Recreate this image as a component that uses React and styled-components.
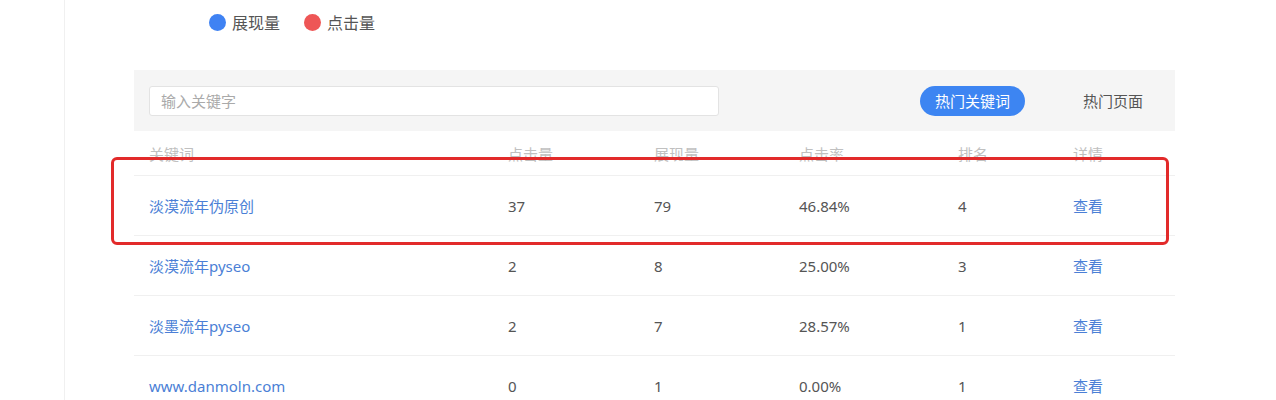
import React from 'react';
import styled, { createGlobalStyle } from 'styled-components';

const GlobalStyle = createGlobalStyle`
  body {
    margin: 0;
    background: #fff;
    font-family: "Noto Sans", "Noto Sans CJK SC", sans-serif;
  }
`;

const Page = styled.div`
  display: flex;
  height: 400px;
  overflow: hidden;
`;

const Gutter = styled.div`
  width: 64px;
  flex-shrink: 0;
`;

const Main = styled.div`
  flex: 1;
  border-left: 1px solid #f0f0f0;
  padding-left: 69px;
  padding-right: 101px;
`;

const Legend = styled.div`
  display: flex;
  gap: 24px;
  padding-left: 75px;
  height: 44px;
  align-items: center;
`;

const LegendItem = styled.div`
  display: flex;
  align-items: center;
  gap: 6px;
  font-size: 16px;
  color: #555;
`;

const Dot = styled.span`
  width: 17px;
  height: 17px;
  border-radius: 50%;
  background: ${p => p.color};
`;

const FilterBar = styled.div`
  margin-top: 26px;
  height: 61px;
  background: #f5f5f5;
  display: flex;
  align-items: center;
  padding: 0 15px;
`;

const SearchInput = styled.input`
  width: 570px;
  height: 30px;
  box-sizing: border-box;
  border: 1px solid #e3e3e3;
  border-radius: 3px;
  background: #fff;
  padding: 0 11px;
  font-size: 15px;
  font-family: inherit;
  color: #333;
  &::placeholder {
    color: #aaa;
  }
`;

const Tabs = styled.div`
  margin-left: auto;
  display: flex;
  align-items: center;
  gap: 58px;
  padding-right: 17px;
`;

const Tab = styled.div`
  height: 30px;
  line-height: 30px;
  padding: 0 ${p => (p.active ? '15px' : '0')};
  border-radius: 15px;
  font-size: 15px;
  background: ${p => (p.active ? '#3d85f2' : 'transparent')};
  color: ${p => (p.active ? '#fff' : '#555')};
`;

const Table = styled.div`
  position: relative;
`;

const Row = styled.div`
  display: grid;
  grid-template-columns: 359px 146px 145px 159px 115px 1fr;
  align-items: center;
  height: ${p => (p.head ? '44px' : '59px')};
  border-bottom: 1px solid #f0f0f0;
  padding-left: 15px;
  font-size: 15px;
  color: ${p => (p.head ? '#c0c0c0' : '#555')};
`;

const Cell = styled.div``;

const LinkCell = styled.div`
  color: #4b7fd6;
`;

const Highlight = styled.div`
  position: absolute;
  left: -23px;
  top: 26px;
  width: 1058px;
  height: 88px;
  box-sizing: border-box;
  border: 3px solid #e22a2a;
  border-radius: 6px;
  pointer-events: none;
`;

const rows = [
  { kw: '淡漠流年伪原创', click: '37', show: '79', rate: '46.84%', rank: '4' },
  { kw: '淡漠流年pyseo', click: '2', show: '8', rate: '25.00%', rank: '3' },
  { kw: '淡墨流年pyseo', click: '2', show: '7', rate: '28.57%', rank: '1' },
  { kw: 'www.danmoln.com', click: '0', show: '1', rate: '0.00%', rank: '1' },
];

export default function App() {
  return (
    <>
      <GlobalStyle />
      <Page>
        <Gutter />
        <Main>
          <Legend>
            <LegendItem><Dot color="#3f82f3" />展现量</LegendItem>
            <LegendItem><Dot color="#ee5656" />点击量</LegendItem>
          </Legend>
          <FilterBar>
            <SearchInput placeholder="输入关键字" />
            <Tabs>
              <Tab active>热门关键词</Tab>
              <Tab>热门页面</Tab>
            </Tabs>
          </FilterBar>
          <Table>
            <Row head>
              <Cell>关键词</Cell>
              <Cell>点击量</Cell>
              <Cell>展现量</Cell>
              <Cell>点击率</Cell>
              <Cell>排名</Cell>
              <Cell>详情</Cell>
            </Row>
            {rows.map(r => (
              <Row key={r.kw}>
                <LinkCell>{r.kw}</LinkCell>
                <Cell>{r.click}</Cell>
                <Cell>{r.show}</Cell>
                <Cell>{r.rate}</Cell>
                <Cell>{r.rank}</Cell>
                <LinkCell>查看</LinkCell>
              </Row>
            ))}
            <Highlight />
          </Table>
        </Main>
      </Page>
    </>
  );
}
